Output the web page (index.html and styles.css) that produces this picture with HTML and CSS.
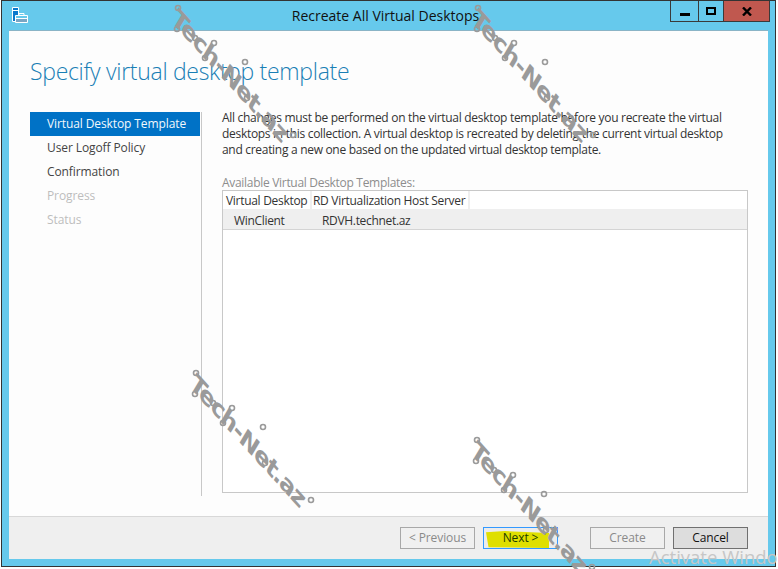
FILE: index.html
```html
<!DOCTYPE html>
<html lang="en">
<head>
<meta charset="utf-8">
<title>Recreate All Virtual Desktops</title>
<link rel="stylesheet" href="styles.css">
</head>
<body>
<div class="window">
  <header class="titlebar">
    <svg class="app-icon" width="18" height="18" viewBox="0 0 18 18">
      <path d="M1.5 1.500h6v14h-6z" fill="#0a78cc" stroke="#fff"/>
      <path d="M2 4.500h5" stroke="#fff"/>
      <path d="M4.500 9.500h12v7h-12z" fill="#66c9ec" stroke="#fff"/>
      <path d="M8 9.500v-2h5v2" fill="none" stroke="#fff"/>
      <path d="M5 12.500h11" stroke="#fff"/>
      <path d="M5 13h11v3H5z" fill="#7aa6c4"/>
    </svg>
    <div class="title">Recreate All Virtual Desktops</div>
    <div class="controls">
      <div class="ctl ctl-min"><span class="min-glyph"></span></div>
      <div class="ctl ctl-max"><span class="max-glyph"></span></div>
      <div class="ctl ctl-close">
        <svg width="10" height="9" viewBox="0 0 10 9"><path d="M1 0.500l8 8M9 0.500l-8 8" stroke="#000" stroke-width="2.400" fill="none"/></svg>
      </div>
    </div>
  </header>
  <main class="client">
    <div class="body">
      <h1 class="heading">Specify virtual desktop template</h1>
      <div class="columns">
        <nav class="nav">
          <div class="step step-active">Virtual Desktop Template</div>
          <div class="step">User Logoff Policy</div>
          <div class="step">Confirmation</div>
          <div class="step step-off">Progress</div>
          <div class="step step-off">Status</div>
        </nav>
        <section class="panel">
          <p class="intro">All changes must be performed on the virtual desktop template before you recreate the virtual desktops in this collection. A virtual desktop is recreated by deleting the current virtual desktop and creating a new one based on the updated virtual desktop template.</p>
          <div class="list-label">Available Virtual Desktop Templates:</div>
          <div class="grid">
            <div class="grid-head">
              <div class="hcell hcell-a">Virtual Desktop</div>
              <div class="hcell hcell-b">RD Virtualization Host Server</div>
            </div>
            <div class="grid-row">
              <div class="cell-a">WinClient</div>
              <div class="cell-b">RDVH.technet.az</div>
            </div>
          </div>
        </section>
      </div>
    </div>
    <footer class="footer">
      <button class="btn btn-off">&lt; Previous</button>
      <button class="btn btn-next"><span class="marker"></span><span class="btn-label">Next &gt;</span></button>
      <button class="btn btn-off btn-create">Create</button>
      <button class="btn btn-cancel">Cancel</button>
    </footer>
  </main>
</div>

<svg class="mark mark-1" width="130" height="135" viewBox="0 0 130 135"><use href="#wm"/></svg>
<svg class="mark mark-2" width="130" height="135" viewBox="0 0 130 135"><use href="#wm"/></svg>
<svg class="mark mark-3" width="130" height="135" viewBox="0 0 130 135"><use href="#wm"/></svg>
<svg class="mark mark-4" width="130" height="135" viewBox="0 0 130 135"><use href="#wm"/></svg>
<svg class="defs" width="0" height="0">
  <defs>
    <g id="wm">
      <g fill="none" stroke="#9a9a9a" stroke-width="1.600">
        <circle cx="6" cy="6" r="2.500"/>
        <circle cx="5" cy="27" r="2.500"/>
        <circle cx="23" cy="36" r="2.500"/>
        <circle cx="33" cy="56" r="2.500"/>
        <circle cx="42" cy="41" r="2.500"/>
        <circle cx="73" cy="60" r="2.500"/>
        <circle cx="75" cy="96" r="2.500"/>
        <circle cx="121" cy="133" r="2.500"/>
      </g>
      <text class="mark-text" transform="translate(-1.600 19) rotate(47.800) skewX(17) scale(1.300 1)" textLength="128" lengthAdjust="spacing">Tech-Net.az</text>
    </g>
  </defs>
</svg>
<div class="activate">Activate Windows</div>
</body>
</html>
```

FILE: styles.css
```css
* { box-sizing: border-box; }
html, body { margin: 0; height: 100%; overflow: hidden; }
body {
  background: #fff;
  font-family: "Open Sans", "Noto Sans", sans-serif;
  font-size: 12px;
  color: #222;
  padding-left: 1px;
}
.window {
  width: 775px;
  height: 567px;
  background: #66c9ec;
  border: 1px solid #333;
  display: flex;
  flex-direction: column;
  padding: 0 7px 7px 7px;
}
.titlebar {
  height: 29px;
  flex: none;
  display: flex;
  position: relative;
  margin: 0 -7px;
  padding-left: 9px;
}
.app-icon { margin-top: 5px; }
.title {
  position: absolute;
  left: 0;
  right: 0;
  top: 5px;
  text-align: center;
  font-size: 14px;
  line-height: 20px;
  color: #111;
  padding-right: 6px;
}
.controls {
  position: absolute;
  top: 0;
  right: 5px;
  display: flex;
  height: 21px;
  border: 1px solid #3a3a3a;
  border-top: 0;
}
.ctl { display: flex; align-items: center; justify-content: center; position: relative; }
.ctl-min { width: 28px; border-right: 1px solid #3a3a3a; }
.ctl-max { width: 25px; border-right: 1px solid #3a3a3a; }
.ctl-close { width: 45px; background: #c0584f; }
.min-glyph { width: 10px; height: 3px; background: #000; margin-top: 6px; }
.max-glyph { width: 10px; height: 8px; border: 2px solid #000; }
.client {
  flex: 1;
  min-height: 0;
  background: #fdfdfd;
  border-top: 1px solid #8ab4c6;
  display: flex;
  flex-direction: column;
}
.body { flex: 1; min-height: 0; padding: 0 20px 0 21px; display: flex; flex-direction: column; }
.heading {
  margin: 24px 0 0;
  height: 57px;
  font-size: 23px;
  line-height: 32px;
  font-weight: 300;
  color: #1a7fb5;
  letter-spacing: -0.3px;
}
.columns { flex: 1; min-height: 0; display: flex; padding-bottom: 20px; }
.nav {
  width: 172px;
  flex: none;
  border-right: 1px solid #c8c8c8;
  margin-right: 20px;
}
.step {
  width: 170px;
  height: 24px;
  line-height: 24px;
  padding-left: 17px;
  color: #444;
  letter-spacing: -0.1px;
}
.step-active { background: #0072c6; color: #f2f8fc; }
.step-off { color: #bdbdbd; }
.panel { flex: 1; min-width: 0; display: flex; flex-direction: column; margin-top: -2px; }
.intro { margin: 0; max-width: 510px; line-height: 16px; color: #333; letter-spacing: -0.3px; }
.list-label { margin-top: 17px; line-height: 16px; height: 15px; color: #8d8d8d; letter-spacing: -0.3px; }
.grid { flex: 1; border: 1px solid #c8c8c8; background: #fff; margin-bottom: 3px; }
.grid-head { height: 19px; display: flex; background: #efefef; }
.hcell { background: #fff; line-height: 19px; height: 18px; color: #333; letter-spacing: -0.3px; padding-left: 3px; white-space: nowrap; }
.hcell-a { width: 87px; margin-right: 2px; }
.hcell-b { width: 156px; padding-left: 1px; margin-right: 2px; }
.grid-head::after { content: ""; flex: 1; background: #fff; height: 18px; }
.grid-row { height: 20px; display: flex; background: #efefef; border-bottom: 1px solid #d4d4d4; padding-top: 1px; line-height: 19px; color: #333; letter-spacing: -0.32px; }
.cell-a { width: 99px; padding-left: 11px; }
.footer {
  flex: none;
  height: 43px;
  background: #efefef;
  border-top: 1px solid #d8d8d8;
  display: flex;
  justify-content: flex-end;
  padding: 10px 20px 0 0;
  gap: 8px;
}
.btn {
  width: 75px;
  height: 22px;
  padding: 0;
  background: #f0f0f0;
  border: 1px solid #a8a8a8;
  font-family: inherit;
  font-size: 12px;
  line-height: 18px;
  color: #8a8a8a;
  letter-spacing: -0.1px;
  position: relative;
}
.btn-next { border-color: #3399ff; color: #1b3a00; background: #ececec; }
.btn-create { margin-left: 24px; }
.btn-cancel { background: #dddddd; border-color: #707070; color: #111; }
.marker {
  position: absolute;
  left: 2px;
  top: 3px;
  width: 63px;
  height: 17px;
  background: #dfdf00;
  clip-path: polygon(0 8%, 30% 0, 100% 12%, 100% 100%, 4% 96%);
}
.btn-label { position: relative; }
.mark { position: absolute; overflow: visible; }
.mark-1 { left: 172px; top: 2px; }
.mark-2 { left: 472px; top: 2px; }
.mark-3 { left: 190px; top: 367px; }
.mark-4 { left: 471px; top: 434px; }
.defs { position: absolute; }
.mark-text {
  font-family: "DejaVu Sans", sans-serif;
  font-weight: 700;
  font-size: 21px;
  fill: #9a9a9a;
}
.activate {
  position: absolute;
  left: 649px;
  top: 546px;
  font-size: 18.500px;
  line-height: 22px;
  color: #c6c6c6;
  white-space: nowrap;
}
```
